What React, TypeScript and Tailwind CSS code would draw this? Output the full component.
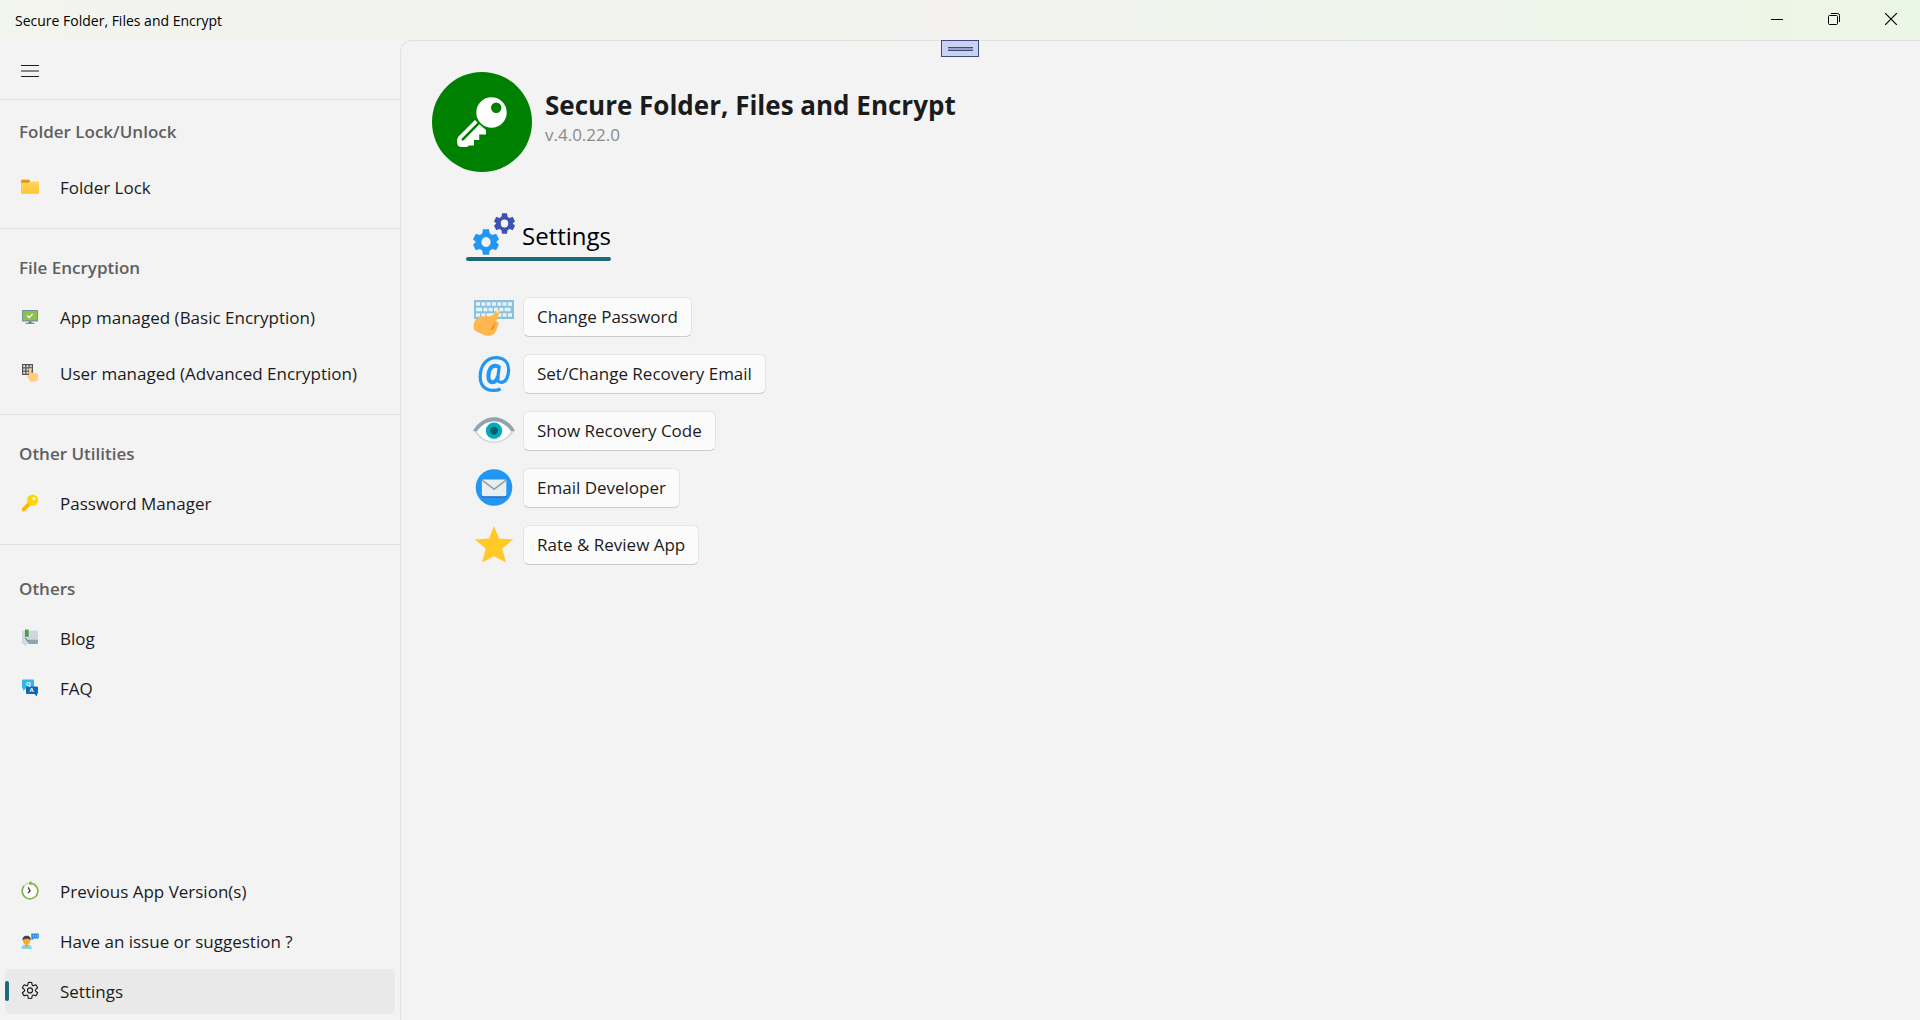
import React, { useState } from 'react';

type NavItem = {
  id: string;
  label: string;
  icon: React.ReactNode;
};

const FolderIcon = () => (
  <svg viewBox="0 0 18 18" className="size-[18px]">
    <defs>
      <linearGradient id="folder" x1="0" y1="0" x2="0" y2="1">
        <stop offset="0" stopColor="#ffd767" />
        <stop offset="1" stopColor="#ffc52e" />
      </linearGradient>
    </defs>
    <path d="M0 2.6a.8.8 0 0 1 .8-.8h7.4l1 1.6H17a1 1 0 0 1 1 1V15a.8.8 0 0 1-.8.8H.8A.8.8 0 0 1 0 15z" fill="url(#folder)" />
    <path d="M0 2.6a.8.8 0 0 1 .8-.8h7.4l.8 1.4L8 4.8H0z" fill="#e09a0a" />
  </svg>
);

const MonitorIcon = () => (
  <svg viewBox="0 0 18 18" className="size-[18px]">
    <rect x="1" y="2" width="16" height="11.5" rx=".6" fill="#78909c" />
    <rect x="2" y="3" width="14" height="9.2" fill="#8bc34a" />
    <path d="M7.5 13.5h3V15h-3z" fill="#546e7a" />
    <path d="M4.5 14.8h9V16h-9z" fill="#78909c" />
    <path d="m6.2 7.4 2 2 3.4-3.4" fill="none" stroke="#fff" strokeWidth="1.4" />
  </svg>
);

const KeypadIcon = () => (
  <svg viewBox="0 0 18 18" className="size-[18px]">
    <rect x="1" y="0" width="11" height="11" fill="#555" />
    <path d="M2.200 1.200h2v2h-2zm3.300 0h2v2h-2zm3.300 0h2v2h-2zM2.200 4.500h2v2h-2zm3.300 0h2v2h-2zm3.300 0h2v2h-2zM2.200 7.800h2v2h-2zm3.300 0h2v2h-2z" fill="#e4e4e4" />
    <path d="M8 5.200a1.200 1.200 0 0 1 2.400 0v3.200l5.200.8a1.600 1.600 0 0 1 1.400 1.600v3c0 2.600-1.400 4-3.800 4h-1.400c-2.200 0-3-.8-3.800-2.200l-1.600-3c-.4-.9.8-1.600 1.600-1z" fill="#ffcc80" />
  </svg>
);

const KeyIcon = () => (
  <svg viewBox="0 0 18 18" className="size-[18px]">
    <path d="m8.200 6.800 3 3-7.800 7.400c-.8.7-2.400.1-2.600-.9v-1.600z" fill="#ffb300" />
    <circle cx="11.600" cy="6.200" r="5.600" fill="#ffd600" />
    <circle cx="12.900" cy="4.700" r="1.700" fill="#fffbe0" />
  </svg>
);

const BlogIcon = () => (
  <svg viewBox="0 0 18 18" className="size-[18px]">
    <path d="M2.4 1.600h13.200A1.400 1.400 0 0 1 17 3v10.600a1.400 1.400 0 0 1-1.400 1.400H6.400l-2.800 2.600V15H2.400A1.400 1.400 0 0 1 1 13.600V3a1.400 1.400 0 0 1 1.400-1.400z" fill="#cfd8dc" />
    <path d="M5 10.800h12v2.800a1.400 1.400 0 0 1-1.400 1.400H8.200z" fill="#90a4ae" />
    <path d="m4.200 9 3.200 3.400" stroke="#546e7a" />
    <path d="M4 .4h3.600v7.800L5.800 7.400 4 8.200z" fill="#43a047" />
  </svg>
);

const FaqIcon = () => (
  <svg viewBox="0 0 18 18" className="size-[18px]">
    <path d="M2 .6h10a1 1 0 0 1 1 1v8H5l-3 2.200V9.600a1 1 0 0 1-1-1v-7a1 1 0 0 1 1-1z" fill="#35b5ee" />
    <path d="M6 7.400h10a1 1 0 0 1 1 1V14a1 1 0 0 1-1 1v2.600L13.400 15H6a1 1 0 0 1-1-1V8.400a1 1 0 0 1 1-1z" fill="#0f66b3" />
    <text x="5" y="6.800" fontSize="6" fontWeight="700" fill="#fff">Q</text>
    <text x="8.600" y="13.400" fontSize="6" fontWeight="700" fill="#fff">A</text>
  </svg>
);

const HistoryIcon = () => (
  <svg viewBox="0 0 18 18" className="size-[18px] overflow-visible">
    <circle cx="9" cy="9" r="7.800" fill="#fff" />
    <path d="M9 1.200a7.800 7.800 0 1 1-5.800 2.600" fill="none" stroke="#7cb342" strokeWidth="1.600" />
    <path d="M3.200 3.800A7.800 7.800 0 0 1 7 1.500" fill="none" stroke="#c5e1a5" strokeWidth="1.600" />
    <path d="M10.400-1 7 1.200l3.400 2.400z" fill="#7cb342" />
    <path d="m7 5.400 2.200 3.400L7 11" fill="none" stroke="#333" strokeWidth="1.200" />
  </svg>
);

const SupportIcon = () => (
  <svg viewBox="0 0 18 18" className="size-[18px]">
    <path d="M.4 17c0-3 1.800-4.400 5.200-4.400s5.200 1.400 5.200 4.400z" fill="#81d4fa" />
    <path d="M3.600 12.600h4L5.600 16z" fill="#ff9800" />
    <circle cx="5.600" cy="8.800" r="3.600" fill="#ffa726" />
    <path d="M1.600 8.400C1.200 5.200 3.400 3.800 5.800 3.800s4.400 1.600 3.800 4.600c-.8-1-1.200-1.600-3.400-1.600S2.400 7.400 1.600 8.400z" fill="#424242" />
    <path d="M10.200 1.400h7.600v5h-4.600l-2.600 1.800V6.400h-.4z" fill="#2f8fe6" />
    <path d="M12 3.400h1v1h-1zm2 0h1v1h-1zm2 0h1v1h-1z" fill="#ffcc80" />
  </svg>
);

const GearOutlineIcon = () => (
  <svg viewBox="0 0 20 20" className="size-5" fill="none" stroke="#1b1b1b" strokeWidth="1.150" strokeLinejoin="round">
    <path d="M8.300 1.500a8.800 8.800 0 0 1 3.400 0l.4 2.200a1.200 1.200 0 0 0 1.600.9l2.100-.8a8.800 8.800 0 0 1 1.800 3l-1.800 1.600a1.200 1.200 0 0 0 0 1.900l1.800 1.500a8.800 8.800 0 0 1-1.800 3l-2.100-.7a1.200 1.200 0 0 0-1.600.9l-.4 2.300a8.800 8.800 0 0 1-3.400 0l-.4-2.300a1.200 1.200 0 0 0-1.600-.9l-2.100.7a8.800 8.800 0 0 1-1.800-3l1.800-1.500a1.200 1.200 0 0 0 0-1.900L2.400 6.800a8.800 8.800 0 0 1 1.800-3l2.100.8a1.200 1.200 0 0 0 1.600-.9z" />
    <circle cx="10" cy="9.400" r="2.500" />
  </svg>
);

const sections: { title: string; items: NavItem[]; className: string; listClassName: string }[] = [
  {
    title: 'Folder Lock/Unlock',
    className: 'pt-1.5 pb-4',
    listClassName: 'mt-1.5',
    items: [{ id: 'folder', label: 'Folder Lock', icon: <FolderIcon /> }],
  },
  {
    title: 'File Encryption',
    className: 'pt-[13px] pb-4',
    listClassName: 'gap-1.5',
    items: [
      { id: 'basic', label: 'App managed (Basic Encryption)', icon: <MonitorIcon /> },
      { id: 'advanced', label: 'User managed (Advanced Encryption)', icon: <KeypadIcon /> },
    ],
  },
  {
    title: 'Other Utilities',
    className: 'pt-[13px] pb-4',
    listClassName: '',
    items: [{ id: 'passwords', label: 'Password Manager', icon: <KeyIcon /> }],
  },
  {
    title: 'Others',
    className: 'pt-[18px]',
    listClassName: '',
    items: [
      { id: 'blog', label: 'Blog', icon: <BlogIcon /> },
      { id: 'faq', label: 'FAQ', icon: <FaqIcon /> },
    ],
  },
];

const footerItems: NavItem[] = [
  { id: 'versions', label: 'Previous App Version(s)', icon: <HistoryIcon /> },
  { id: 'support', label: 'Have an issue or suggestion ?', icon: <SupportIcon /> },
  { id: 'settings', label: 'Settings', icon: <GearOutlineIcon /> },
];

const gearPath =
  'M-2.600-10h5.200l.7 3.300 2.200 1.200 3.300-1 2.500 4.300-2.400 2.200v0l2.400 2.200-2.500 4.300-3.300-1-2.200 1.200-.7 3.300h-5.200l-.7-3.300-2.200-1.200-3.300 1-2.500-4.300L-8.900 0l-2.400-2.200 2.500-4.300 3.300 1 2.200-1.200zM0-4a4 4 0 1 0 0 8 4 4 0 0 0 0-8z';

const GearsIcon = () => (
  <svg viewBox="0 0 44 44" className="size-11">
    <path d={gearPath} fill="#2196f3" fillRule="evenodd" transform="translate(14 30) scale(1.150 1.280)" />
    <path d={gearPath} fill="#3f51b5" fillRule="evenodd" transform="translate(32.500 11.500) scale(.93 1.020)" />
  </svg>
);

const KeyboardIcon = () => (
  <svg viewBox="0 0 44 44" className="size-11">
    <rect x="2" y="5" width="40" height="19" fill="#90bfdb" />
    <path d="M4 9h36" stroke="#e1f5fe" strokeWidth="3.600" strokeDasharray="4 1.330" />
    <path d="M4 14.500h36" stroke="#e1f5fe" strokeWidth="3.600" strokeDasharray="6 1.330 4 1.330 4 1.330 4 1.330 4 1.330 6 9" />
    <path d="M4 20h36" stroke="#e1f5fe" strokeWidth="3.600" strokeDasharray="4 1.330 4 1.330 14.670 1.330 4 1.330" />
    <path d="M24.500 15.400c.8-1.800 4-1 3.300 1.200l-3.600 9.600c2 .4 2.800 1.400 2.200 3.200l-2.600 7c-2.200 4.600-8.600 5.600-13 3.200L3.400 36c-2.600-2.600-1.800-6.400-.8-9.600 1.800-4 5.600-5 9.400-5.200h5c1.600 0 3.400-.6 4.200-1.800z" fill="#ffb74d" />
    <path d="m23.600 27-5.400 7.400 2 .4c2-1.400 2.800-4.400 3.400-7.800z" fill="#f09020" />
    <circle cx="25.800" cy="16.300" r="1.600" fill="#ffe0b2" />
  </svg>
);

const AtIcon = () => (
  <svg viewBox="0 0 44 44" className="size-11" fill="none" stroke="#2196f3">
    <path d="M28.600 37c-2 1-4.400 1.400-7.200 1.400C13 38.400 8.200 33.200 8.200 25 8.200 13.600 14.400 5.600 24 5.600c8 0 12.600 4.800 12.600 12.400 0 7-3 12.400-7.400 12.400-3 0-3.800-2-3.400-5l1.600-11.600" strokeWidth="3.200" />
    <path d="M26.800 15c-1-.8-2.200-1.200-3.600-1.200-4.200 0-6.800 4.600-6.800 10.200 0 4 1.400 6.200 4 6.200 2.800 0 4.800-2.400 5.600-6" strokeWidth="4" />
  </svg>
);

const EyeIcon = () => (
  <svg viewBox="0 0 44 44" className="size-11">
    <path d="M2 22C12 5 32 5 42 22 32 38 12 38 2 22z" fill="#cfd8dc" />
    <path d="M4.500 22C13 8.500 31 8.500 39.500 22 31 36 13 36 4.500 22z" fill="#fff" />
    <circle cx="22" cy="21.700" r="8.200" fill="#00acc1" />
    <circle cx="22" cy="21.700" r="4" fill="#006064" />
    <path d="M1 22C11 3.600 33 3.600 43 22l-4 .2C30 8.800 14 8.800 5 22.200z" fill="#90a4ae" />
  </svg>
);

const MailIcon = () => (
  <svg viewBox="0 0 44 44" className="size-11">
    <circle cx="22" cy="21.500" r="18.300" fill="#2196f3" />
    <rect x="9.800" y="15" width="24.600" height="16.600" rx="1.600" fill="#1565c0" />
    <rect x="9.800" y="13.400" width="24.600" height="16.800" rx="1.600" fill="#e9eef1" />
    <path d="m10.400 14.400 11.700 8.800 11.700-8.800" fill="none" stroke="#90a4ae" strokeWidth="1.700" />
  </svg>
);

const StarIcon = () => (
  <svg viewBox="0 0 44 44" className="size-11">
    <path d="m22 3 5 12.500 14.200 1-10.900 9.100L33.900 39.400 22 33.200 10.100 39.400l3.600-13.800L2.800 16.500l14.200-1z" fill="#ffca28" />
  </svg>
);

const AppLogo = () => (
  <svg viewBox="0 0 100 100" className="size-[100px]">
    <circle cx="50" cy="50" r="50" fill="#008000" />
    <path
      d="M59.500 25.300a15.200 15.200 0 1 1 0 30.400 15.200 15.200 0 0 1 0-30.400zm4.700 5.200a5.200 5.200 0 1 0 0 10.400 5.200 5.200 0 0 0 0-10.400z"
      fill="#fff"
      fillRule="evenodd"
    />
    <path d="M43 48 26.500 64.500c-1.500 1.700-1.500 4-1.300 6.500.2 3 1.800 4 4.800 4h5l2-1.500h5V68h5.200v-5.500H54V58l-7.500-6.500z" fill="#fff" />
    <path d="m30.800 67.400 16-16.200" stroke="#008000" strokeWidth="2.600" strokeLinecap="round" />
  </svg>
);

const actions = [
  { label: 'Change Password', icon: <KeyboardIcon /> },
  { label: 'Set/Change Recovery Email', icon: <AtIcon /> },
  { label: 'Show Recovery Code', icon: <EyeIcon /> },
  { label: 'Email Developer', icon: <MailIcon /> },
  { label: 'Rate & Review App', icon: <StarIcon /> },
];

function NavButton({ item, active, onSelect }: { item: NavItem; active: boolean; onSelect: (id: string) => void }) {
  return (
    <li className="flex h-[50px] items-center px-[5px]">
      <button
        onClick={() => onSelect(item.id)}
        className={`relative flex h-[45px] w-full items-center rounded-md text-left text-[17px] ${active ? 'bg-[#e9e9e9]' : 'hover:bg-[#ededed]'}`}
      >
        {active && <span className="absolute left-0 h-5 w-1 rounded-full bg-[#1b6b79]" />}
        <span className="flex w-[50px] shrink-0 justify-center">{item.icon}</span>
        <span className="pt-0.5 pl-[5px]">{item.label}</span>
      </button>
    </li>
  );
}

export default function App() {
  const [current, setCurrent] = useState('settings');

  return (
    <div className="relative flex min-h-screen flex-col bg-[#f3f3f3] font-['Open_Sans','Noto_Sans',sans-serif] text-[#1b1b1b]">
      <header className="flex h-10 shrink-0 items-center justify-between bg-linear-to-r from-[#f2f4ee] via-[#f3f2f0] to-[#ebf7e6] pr-px pl-[15px]">
        <span className="pt-0.5 text-sm text-black">Secure Folder, Files and Encrypt</span>
        <div className="flex h-full pb-0.5">
          <button aria-label="Minimize" className="flex w-[57px] items-center justify-center">
            <svg viewBox="0 0 12 12" className="size-3" stroke="#000"><path d="M0 6.500h12" /></svg>
          </button>
          <button aria-label="Restore" className="flex w-[57px] items-center justify-center">
            <svg viewBox="0 0 12 12" className="size-3" fill="none" stroke="#000">
              <rect x=".5" y="2.500" width="9" height="9" rx="1" />
              <path d="M3 .5h6.500a2 2 0 0 1 2 2V9" />
            </svg>
          </button>
          <button aria-label="Close" className="flex w-[57px] items-center justify-center">
            <svg viewBox="0 0 12 12" className="size-3" stroke="#000" strokeWidth="1.200"><path d="m0 0 12 12M12 0 0 12" /></svg>
          </button>
        </div>
      </header>

      <div className="flex flex-1">
        <nav className="flex w-[400px] shrink-0 flex-col pb-1">
          <div className="flex h-[60px] items-center border-b border-[#e2e2e2] px-[5px] pt-0.5">
            <button aria-label="Toggle navigation" className="flex h-[45px] w-[50px] items-center justify-center">
              <svg viewBox="0 0 20 14" className="h-3.5 w-5" stroke="#1b1b1b" strokeWidth="1.200" strokeLinecap="round">
                <path d="M1.500 1.500h17M1.500 7h17M1.500 12.500h17" />
              </svg>
            </button>
          </div>
          <div className="flex flex-col divide-y divide-[#e2e2e2]">
            {sections.map(section => (
              <section key={section.title} className={section.className}>
                <h2 className="flex h-[50px] items-center pt-0.5 pl-[19px] text-[17px] font-semibold text-[#606060]">{section.title}</h2>
                <ul className={`flex flex-col ${section.listClassName}`}>
                  {section.items.map(item => (
                    <NavButton key={item.id} item={item} active={current === item.id} onSelect={setCurrent} />
                  ))}
                </ul>
              </section>
            ))}
          </div>
          <ul className="mt-auto flex flex-col">
            {footerItems.map(item => (
              <NavButton key={item.id} item={item} active={current === item.id} onSelect={setCurrent} />
            ))}
          </ul>
        </nav>

        <main className="flex-1 rounded-tl-xl border-t border-l border-[#e2e2e2] px-[31px] pt-[31px]">
          <div className="flex items-center gap-[13px]">
            <AppLogo />
            <div className="pb-1.5">
              <h1 className="text-[26px] leading-8 font-bold">Secure Folder, Files and Encrypt</h1>
              <p className="text-[17px] leading-7 text-[#8a8a8a]">v.4.0.22.0</p>
            </div>
          </div>

          <div className="mt-10 ml-[34px]">
            <div className="inline-flex flex-col gap-px">
              <h2 className="flex items-center gap-1.5 pl-1.5 text-2xl text-black">
                <GearsIcon />
                <span className="pt-1">Settings</span>
              </h2>
              <span className="h-1 rounded-full bg-[#1b6b79]" />
            </div>

            <ul className="mt-[34px] flex flex-col gap-4 pl-1.5">
              {actions.map(action => (
                <li key={action.label} className="flex h-[41px] items-center gap-[7px]">
                  {action.icon}
                  <button className="h-10 rounded-md border border-[#e5e5e5] border-b-[#cccccc] bg-[#fbfbfb] px-[13px] text-[17px] hover:bg-[#f6f6f6]">
                    {action.label}
                  </button>
                </li>
              ))}
            </ul>
          </div>
        </main>
      </div>

      {/* Collapsed toolbar handle over the top edge of the content */}
      <div className="absolute top-10 left-1/2 flex h-[17px] w-[38px] -translate-x-1/2 items-center justify-center border border-[#3d4a80] bg-[#c9d3ef]">
        <span className="h-1 w-[25px] border-y border-[#3d4a80] bg-[#98a3cb]" />
      </div>
    </div>
  );
}
